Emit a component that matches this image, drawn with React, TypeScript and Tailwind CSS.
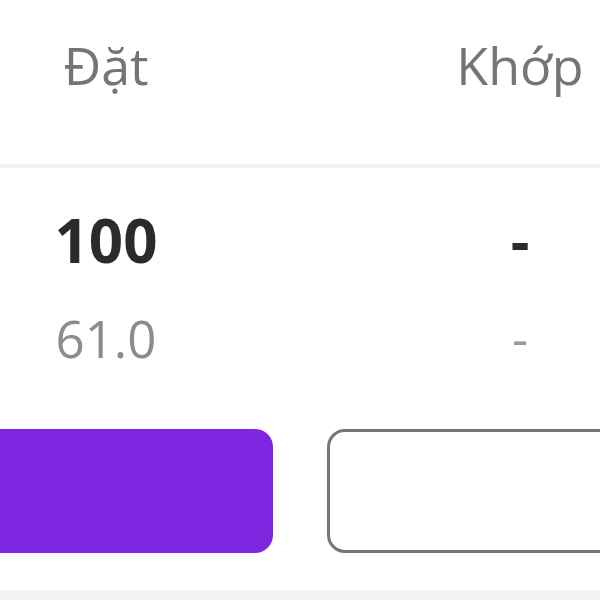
import React from "react";

export default function App() {
  return (
    <div
      className="w-[600px] h-[600px] overflow-hidden bg-white flex flex-col"
      style={{ fontFamily: '"Open Sans", "Noto Sans", sans-serif' }}
    >
      <div className="h-[164px] flex pt-[29px] shrink-0">
        <div className="w-[212px] text-center text-[52px] leading-[72px] text-[#757575]">Đặt</div>
        <div className="w-[160px] ml-auto text-center text-[52px] leading-[72px] text-[#757575] whitespace-nowrap">Khớp</div>
      </div>
      <div className="h-[4px] bg-[#f2f2f2] shrink-0" />
      <div className="flex pt-[36px] shrink-0">
        <div className="w-[212px] text-center text-[60px] leading-[72px] font-bold text-[#2b2b2b]">100</div>
        <div className="w-[160px] ml-auto text-center text-[58px] leading-[72px] font-bold text-[#2b2b2b]">-</div>
      </div>
      <div className="flex mt-[32px] shrink-0">
        <div className="w-[212px] text-center text-[51px] leading-[60px] text-[#8c8c8c]">61.0</div>
        <div className="w-[160px] ml-auto text-center text-[50px] leading-[60px] text-[#9a9a9a]">-</div>
      </div>
      <div className="flex gap-[54px] mt-[61px] -ml-[40px] h-[124px] shrink-0">
        <div className="w-[313px] shrink-0 h-full rounded-[18px] bg-[#7f27e0]" />
        <div className="w-[313px] shrink-0 h-full rounded-[18px] border-[3px] border-[#767676] bg-white" />
      </div>
      <div className="mt-[37px] h-[10px] bg-[#f4f4f4] shrink-0" />
    </div>
  );
}
